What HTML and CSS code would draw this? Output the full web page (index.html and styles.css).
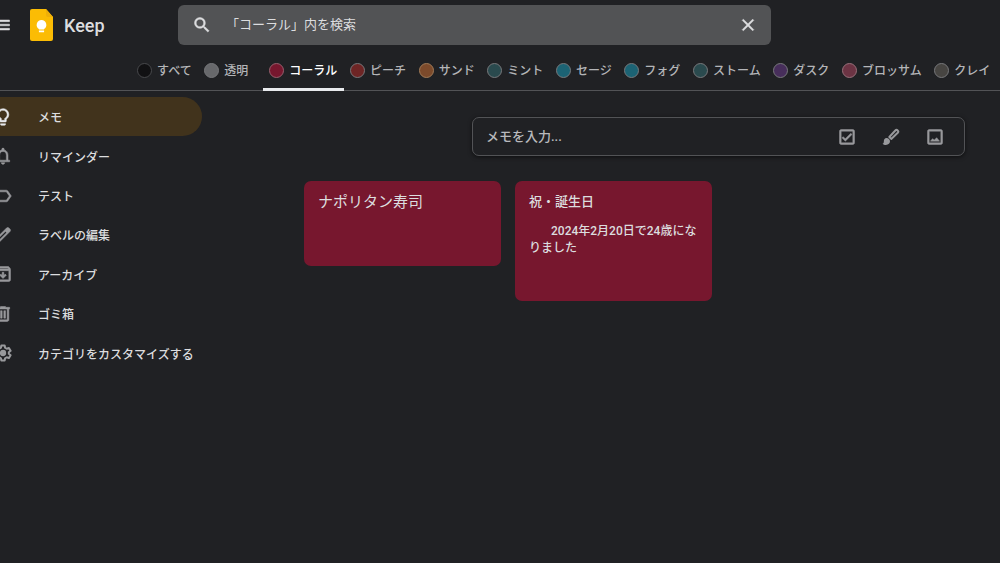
FILE: index.html
```html
<!DOCTYPE html>
<html lang="ja">
<head>
<meta charset="utf-8">
<meta name="viewport" content="width=device-width, initial-scale=1">
<title>Keep</title>
<link rel="stylesheet" href="styles.css">
</head>
<body>
<div class="app">
  <header class="header">
    <div class="topbar">
      <button class="icon-button" type="button" aria-label="メインメニュー">
        <svg class="icon icon-bold" viewBox="0 0 24 24"><path d="M3 18h18v-2H3v2zm0-5h18v-2H3v2zm0-7v2h18V6H3z"/></svg>
      </button>
      <a class="brand" href="#">
        <svg class="brand-logo" viewBox="0 0 24 32" aria-hidden="true">
          <path fill="#fbbc04" d="M2 0h14l7 8v22a2 2 0 0 1-2 2H2a2 2 0 0 1-2-2V2a2 2 0 0 1 2-2z"/>
          <path fill="#efaf08" d="M16 0l7 8h-5a2 2 0 0 1-2-2z"/>
          <path fill="#fff" d="M11.500 11a4.900 4.900 0 0 1 2.600 9v.6H8.900V20A4.900 4.900 0 0 1 11.500 11zM8.900 21.600h5.200v1.700H8.900z"/>
        </svg>
        <span class="brand-name">Keep</span>
      </a>
      <form class="search" role="search">
        <button class="icon-button" type="button" aria-label="検索">
          <svg class="icon icon-bold" viewBox="0 0 24 24"><path d="M15.500 14h-.79l-.28-.27A6.471 6.471 0 0 0 16 9.500 6.500 6.500 0 1 0 9.500 16c1.610 0 3.090-.59 4.230-1.570l.27.28v.79l5 4.990L20.490 19l-4.990-5zm-6 0C7.010 14 5 11.990 5 9.500S7.010 5 9.500 5 14 7.010 14 9.500 11.990 14 9.500 14z"/></svg>
        </button>
        <input class="search-input" type="text" aria-label="検索" placeholder="「コーラル」内を検索">
        <button class="icon-button" type="button" aria-label="検索をクリア">
          <svg class="icon icon-bold" viewBox="0 0 24 24"><path d="M19 6.410L17.590 5 12 10.590 6.410 5 5 6.410 10.590 12 5 17.590 6.410 19 12 13.410 17.590 19 19 17.590 13.410 12z"/></svg>
        </button>
      </form>
    </div>
    <nav class="colors" aria-label="色">
      <button class="color" type="button"><span class="dot dot-all"></span><span class="color-name">すべて</span></button>
      <button class="color" type="button"><span class="dot dot-clear"></span><span class="color-name">透明</span></button>
      <button class="color color-active" type="button" aria-current="true"><span class="dot dot-coral"></span><span class="color-name">コーラル</span></button>
      <button class="color" type="button"><span class="dot dot-peach"></span><span class="color-name">ピーチ</span></button>
      <button class="color" type="button"><span class="dot dot-sand"></span><span class="color-name">サンド</span></button>
      <button class="color" type="button"><span class="dot dot-mint"></span><span class="color-name">ミント</span></button>
      <button class="color" type="button"><span class="dot dot-sage"></span><span class="color-name">セージ</span></button>
      <button class="color" type="button"><span class="dot dot-fog"></span><span class="color-name">フォグ</span></button>
      <button class="color" type="button"><span class="dot dot-storm"></span><span class="color-name">ストーム</span></button>
      <button class="color" type="button"><span class="dot dot-dusk"></span><span class="color-name">ダスク</span></button>
      <button class="color" type="button"><span class="dot dot-blossom"></span><span class="color-name">ブロッサム</span></button>
      <button class="color" type="button"><span class="dot dot-clay"></span><span class="color-name">クレイ</span></button>
    </nav>
  </header>

  <div class="body">
    <nav class="sidebar" aria-label="メニュー">
      <a class="side-item side-active" href="#">
        <svg class="icon icon-bold" viewBox="0 0 24 24"><path d="M9 21c0 .5.400 1 1 1h4c.6 0 1-.5 1-1v-1H9v1zm3-19C8.100 2 5 5.100 5 9c0 2.400 1.200 4.500 3 5.700V17c0 .5.400 1 1 1h6c.6 0 1-.5 1-1v-2.300c1.800-1.300 3-3.400 3-5.700 0-3.900-3.100-7-7-7zm2.850 11.100l-.85.6V16h-4v-2.300l-.85-.6A4.997 4.997 0 0 1 7 9c0-2.760 2.240-5 5-5s5 2.240 5 5c0 1.630-.8 3.160-2.150 4.100z"/></svg>
        メモ
      </a>
      <a class="side-item" href="#">
        <svg class="icon icon-bold" viewBox="0 0 24 24"><path d="M18 17v-6c0-3.070-1.630-5.640-4.500-6.320V4c0-.83-.67-1.500-1.500-1.500s-1.500.67-1.500 1.500v.68C7.640 5.360 6 7.920 6 11v6H4v2h16v-2h-2zm-2 0H8v-6c0-2.480 1.510-4.500 4-4.500s4 2.020 4 4.500v6zm-4 5c1.100 0 2-.9 2-2h-4c0 1.100.9 2 2 2z"/></svg>
        リマインダー
      </a>
      <a class="side-item" href="#">
        <svg class="icon icon-bold" viewBox="0 0 24 24"><path d="M17.630 5.840C17.270 5.330 16.670 5 16 5L5 5.010C3.900 5.010 3 5.900 3 7v10c0 1.100.9 1.990 2 1.990L16 19c.67 0 1.270-.33 1.630-.84L22 12l-4.370-6.160zM16 17H5V7h11l3.550 5L16 17z"/></svg>
        テスト
      </a>
      <a class="side-item" href="#">
        <svg class="icon icon-bold" viewBox="0 0 24 24"><path d="M20.410 4.940l-1.350-1.350c-.78-.78-2.050-.78-2.830 0L3 16.820V21h4.180L20.410 7.770c.79-.78.79-2.050 0-2.830zm-14 14.120L5 19v-1.360l9.820-9.820 1.410 1.410-9.820 9.830z"/></svg>
        ラベルの編集
      </a>
      <a class="side-item" href="#">
        <svg class="icon icon-bold" viewBox="0 0 24 24"><path d="M20.540 5.230l-1.390-1.680C18.880 3.210 18.470 3 18 3H6c-.47 0-.88.21-1.160.55L3.460 5.230C3.170 5.570 3 6.020 3 6.500V19c0 1.100.9 2 2 2h14c1.100 0 2-.9 2-2V6.500c0-.48-.17-.93-.46-1.270zM6.240 5h11.520l.83 1H5.420l.82-1zM5 19V8h14v11H5zm11-5.500l-4 4-4-4 1.410-1.410L11 13.670V10h2v3.670l1.590-1.590L16 13.500z"/></svg>
        アーカイブ
      </a>
      <a class="side-item" href="#">
        <svg class="icon icon-bold" viewBox="0 0 24 24"><path d="M15 4V3H9v1H4v2h1v13c0 1.100.9 2 2 2h10c1.100 0 2-.9 2-2V6h1V4h-5zm2 15H7V6h10v13zM9 8h2v9H9zm4 0h2v9h-2z"/></svg>
        ゴミ箱
      </a>
      <a class="side-item" href="#">
        <svg class="icon" viewBox="0 0 24 24"><path fill="none" stroke="currentColor" stroke-width="2.400" stroke-linejoin="round" d="M10 3h4l.5 2.700 2 1.200 2.600-1 2 3.500-2.100 1.700v1.800l2.100 1.700-2 3.500-2.600-1-2 1.200L14 21h-4l-.5-2.700-2-1.200-2.600 1-2-3.500L5 12.900v-1.800L2.900 9.400l2-3.500 2.600 1 2-1.200z"/><circle cx="12" cy="12" r="3.800"/></svg>
        カテゴリをカスタマイズする
      </a>
    </nav>

    <main class="main">
      <div class="composer">
        <input class="composer-input" type="text" aria-label="メモを入力" placeholder="メモを入力...">
        <button class="icon-button" type="button" aria-label="新しいリスト">
          <svg class="icon icon-bold" viewBox="0 0 24 24"><path d="M19 3H5c-1.100 0-2 .9-2 2v14c0 1.100.9 2 2 2h14c1.100 0 2-.9 2-2V5c0-1.100-.9-2-2-2zm0 16H5V5h14v14zM18 9l-1.400-1.400-6.600 6.600-2.600-2.600L6 13l4 4z"/></svg>
        </button>
        <button class="icon-button" type="button" aria-label="図形描画付きの新しいメモ">
          <svg class="icon" viewBox="0 0 24 24"><path fill="none" stroke="currentColor" stroke-width="2.400" stroke-linejoin="round" d="M10 12l7.200-7.800a1.900 1.900 0 0 1 2.900 2.700L12.300 14.300z"/><path d="M6.500 13.200c2.500 0 4.300 1.800 4.300 4 0 2.500-1.900 4.300-4.900 4.300-1.600 0-3.100-.5-4.100-1.500 1.200-.4 1.600-1.300 1.600-2.700 0-2.400 1.300-4.100 3.100-4.100z"/></svg>
        </button>
        <button class="icon-button" type="button" aria-label="画像付きの新しいメモ">
          <svg class="icon icon-bold" viewBox="0 0 24 24"><path d="M19 3H5c-1.100 0-2 .9-2 2v14c0 1.100.9 2 2 2h14c1.100 0 2-.9 2-2V5c0-1.100-.9-2-2-2zm0 16H5V5h14v14zM6.500 17l2.500-3 2.200 1.600 2.800-2.800 3.500 4.200z"/></svg>
        </button>
      </div>
      <section class="notes">
        <article class="note">
          <h2 class="note-title note-title-large">ナポリタン寿司</h2>
        </article>
        <article class="note">
          <h2 class="note-title">祝・誕生日</h2>
          <p class="note-text">2024年2月20日で24歳になりました</p>
        </article>
      </section>
    </main>
  </div>
</div>
</body>
</html>
```

FILE: styles.css
```css
* {
  box-sizing: border-box;
}

body {
  margin: 0;
  background: #202124;
  color: #dcdddf;
  font-family: Roboto, "Noto Sans CJK JP", sans-serif;
  font-size: 12px;
  overflow-x: hidden;
}

button,
input {
  margin: 0;
  padding: 0;
  border: 0;
  background: none;
  color: inherit;
  font: inherit;
}

a {
  color: inherit;
  text-decoration: none;
}

/* The left edge of the shell runs off the window. */
.app {
  margin-left: -7px;
}

.icon {
  display: block;
  flex: none;
  width: 20px;
  height: 20px;
  fill: currentColor;
}

.icon-bold {
  stroke: currentColor;
  stroke-width: 0.6;
}

.icon-button {
  flex: none;
  display: grid;
  place-items: center;
}

/* Header */
.header {
  border-bottom: 1px solid #525356;
}

.topbar {
  display: flex;
  align-items: center;
  padding: 5px 0 0;
}

.topbar > .icon-button {
  margin-left: -1px;
}

.brand {
  display: flex;
  align-items: center;
  gap: 10px;
  width: 148px;
  margin-left: 18px;
}

.brand-logo {
  display: block;
  width: 24px;
  height: 32px;
}

.brand-name {
  font-size: 18px;
  font-weight: 500;
}

.search {
  flex: 1;
  display: flex;
  align-items: center;
  gap: 14px;
  max-width: 593px;
  height: 40px;
  padding: 0 13px 0 14px;
  border-radius: 6px;
  background: #525355;
}

.search-input {
  flex: 1;
  min-width: 0;
  padding-bottom: 2px;
  font-size: 13px;
  outline: none;
}

.search-input::placeholder {
  color: #dcdddf;
  opacity: 1;
}

/* Colour filter */
.colors {
  display: flex;
  height: 45px;
  padding: 0 3px 0 138px;
}

.color {
  flex: 1 0 auto;
  display: flex;
  align-items: center;
  gap: 5px;
  min-width: 65px;
  margin-bottom: -1px;
  padding: 8px 6px 0;
  border-bottom: 3px solid transparent;
  color: #b4b5b8;
  font-weight: 500;
}

.color-name {
  padding-bottom: 2px;
}

.color-active {
  border-color: #e8eaed;
  border-radius: 2px 2px 0 0;
  color: #fff;
}

.dot {
  width: 15px;
  height: 15px;
  border: 1px solid #77787b;
  border-radius: 50%;
}

.dot-all { background: #111113; border-color: #48494c; }
.dot-clear { background: #67686b; }
.dot-coral { background: #77172e; border-color: #97606d; }
.dot-peach { background: #6e2525; }
.dot-sand { background: #7c4a2b; border-color: #a07b58; }
.dot-mint { background: #2a4a4e; }
.dot-sage { background: #1c6374; }
.dot-fog { background: #1c6374; }
.dot-storm { background: #2a4a4e; }
.dot-dusk { background: #472e5b; }
.dot-blossom { background: #6c3444; border-color: #97707a; }
.dot-clay { background: #474542; }

/* Sidebar */
.body {
  display: flex;
  align-items: flex-start;
}

.sidebar {
  flex: none;
  display: grid;
  grid-auto-rows: 1fr;
  width: 209px;
  min-height: 276px;
  margin-top: 6px;
}

.side-item {
  display: flex;
  align-items: center;
  gap: 25px;
  font-weight: 500;
  white-space: nowrap;
  border-radius: 0 20px 20px 0;
}

.side-item .icon {
  color: #98999c;
}

.side-active {
  background: #41331c;
}

.side-active .icon {
  color: #e8eaed;
}

/* Notes */
.main {
  flex: 1;
  min-width: 0;
  padding: 26px 35px 26px 102px;
}

.composer {
  display: flex;
  align-items: center;
  gap: 24px;
  height: 39px;
  margin-left: 168px;
  padding: 0 19px 0 13px;
  border: 1px solid #525356;
  border-radius: 7px;
  box-shadow: 0 1px 4px rgba(0, 0, 0, 0.6);
  color: #98999c;
}

.composer-input {
  flex: 1;
  min-width: 0;
  font-size: 13px;
  font-weight: 500;
  outline: none;
}

.composer-input::placeholder {
  color: #b8b9bc;
  opacity: 1;
}

.notes {
  display: flex;
  flex-wrap: wrap;
  align-items: flex-start;
  gap: 14px;
  margin-top: 25px;
}

.note {
  width: 197px;
  min-height: 85px;
  padding: 12px 14px 44px;
  border-radius: 7px;
  background: #77172e;
}

.note-title {
  margin: 0;
  font-size: 13px;
  font-weight: 500;
  line-height: 18px;
}

.note-title-large {
  font-size: 15px;
  font-weight: 400;
}

.note-text {
  margin: 12px 0 0;
  font-weight: 500;
  line-height: 17px;
  text-indent: 22px;
}
```
